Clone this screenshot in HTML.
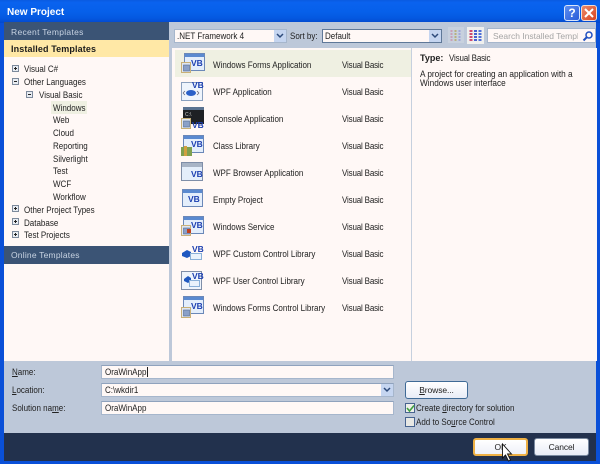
<!DOCTYPE html>
<html><head><meta charset="utf-8">
<style>
html,body{margin:0;padding:0}
body{width:600px;height:464px;position:relative;overflow:hidden;background:#0a50d8;font-family:"Liberation Sans",sans-serif;font-size:9px;color:#222;filter:blur(.3px)}
div,span,svg{position:absolute;box-sizing:border-box}
.t{white-space:nowrap;line-height:12px;height:12px;transform:scaleX(.89);transform-origin:0 50%}
.n{transform:none}
u{text-decoration:underline}
.inp{background:#fff8f6;border:1px solid #a6b6cc;border-top-color:#8fa2bd;height:14px}
.ddb{background:#c5d5f0;width:12px;height:12px}
.btn{background:linear-gradient(#fff,#e8ecf6);border:1px solid #4a6180;border-radius:3px;text-align:center;color:#222;font-size:8.500px;letter-spacing:-.1px}
.v{letter-spacing:-.2px}
</style></head><body>
<div style="left:0;top:0;width:600px;height:23px;background:linear-gradient(#0a5ae0 0,#0a62ee 10%,#0660ea 50%,#0458e0 80%,#0348cc 100%)"></div>
<div class="t n" style="left:7px;top:7px;font-size:10px;font-weight:bold;color:#fff">New Project</div>
<div style="left:564px;top:5px;width:16px;height:16px;background:linear-gradient(135deg,#5d8ef0,#2a5cd8);border:1px solid #dbe6fb;border-radius:3px;color:#fff;font-weight:bold;font-size:12px;line-height:14px;text-align:center">?</div>
<div style="left:581px;top:5px;width:16px;height:16px;background:linear-gradient(135deg,#ec8a6a,#d8431f);border:1px solid #f4dcd2;border-radius:3px"></div>
<svg style="left:584px;top:8px" width="10" height="10"><path d="M1 1L9 9M9 1L1 9" stroke="#fff" stroke-width="2"/></svg>

<div style="left:4px;top:22px;width:592px;height:439px;background:#bdc8d9"></div>

<!-- left -->
<div style="left:4px;top:22px;width:165px;height:18px;background:#3b5475"></div>
<div class="t n" style="left:11px;top:26px;color:#c8d3e2;font-size:8.500px;letter-spacing:.3px">Recent Templates</div>
<div style="left:4px;top:40px;width:165px;height:17px;background:#ffe8a6"></div>
<div class="t n" style="left:11px;top:43px;font-size:9px;font-weight:bold;color:#1c1c1c;letter-spacing:.12px">Installed Templates</div>
<div style="left:4px;top:57px;width:165px;height:189px;background:#fff8f6"></div>
<div style="left:4px;top:246px;width:165px;height:18px;background:#3b5475"></div>
<div class="t n" style="left:11px;top:249px;color:#c8d3e2;font-size:8.500px;letter-spacing:.2px">Online Templates</div>
<div style="left:4px;top:264px;width:165px;height:97px;background:#fff8f6"></div>

<svg style="left:12px;top:65px" width="9" height="9"><rect x=".5" y=".5" width="6" height="6" fill="#e8ecf2" stroke="#7d8a9c"/><path d="M2 3.500h3M3.500 2v3" stroke="#222"/></svg>
<svg style="left:12px;top:78px" width="9" height="9"><rect x=".5" y=".5" width="6" height="6" fill="#e8ecf2" stroke="#7d8a9c"/><path d="M2 3.500h3" stroke="#222"/></svg>
<svg style="left:26px;top:91px" width="9" height="9"><rect x=".5" y=".5" width="6" height="6" fill="#e8ecf2" stroke="#7d8a9c"/><path d="M2 3.500h3" stroke="#222"/></svg>
<svg style="left:12px;top:205px" width="9" height="9"><rect x=".5" y=".5" width="6" height="6" fill="#e8ecf2" stroke="#7d8a9c"/><path d="M2 3.500h3M3.500 2v3" stroke="#222"/></svg>
<svg style="left:12px;top:218px" width="9" height="9"><rect x=".5" y=".5" width="6" height="6" fill="#e8ecf2" stroke="#7d8a9c"/><path d="M2 3.500h3M3.500 2v3" stroke="#222"/></svg>
<svg style="left:12px;top:231px" width="9" height="9"><rect x=".5" y=".5" width="6" height="6" fill="#e8ecf2" stroke="#7d8a9c"/><path d="M2 3.500h3M3.500 2v3" stroke="#222"/></svg>
<div style="left:51px;top:101px;width:36px;height:13px;background:#eff0e2"></div>
<div class="t" style="left:24px;top:63px">Visual C#</div>
<div class="t" style="left:24px;top:76px">Other Languages</div>
<div class="t" style="left:39px;top:89px">Visual Basic</div>
<div class="t" style="left:53px;top:102px">Windows</div>
<div class="t" style="left:53px;top:114px">Web</div>
<div class="t" style="left:53px;top:127px">Cloud</div>
<div class="t" style="left:53px;top:140px">Reporting</div>
<div class="t" style="left:53px;top:153px">Silverlight</div>
<div class="t" style="left:53px;top:165px">Test</div>
<div class="t" style="left:53px;top:178px">WCF</div>
<div class="t" style="left:53px;top:191px">Workflow</div>
<div class="t" style="left:24px;top:204px">Other Project Types</div>
<div class="t" style="left:24px;top:217px">Database</div>
<div class="t" style="left:24px;top:229px">Test Projects</div>

<!-- toolbar -->
<div style="left:174px;top:29px;width:113px;height:14px;background:#fff8f6;border:1px solid #a6b6cc"></div>
<div class="t" style="left:177px;top:30px">.NET Framework 4</div>
<div class="ddb" style="left:274px;top:30px"></div>
<svg style="left:276px;top:33px" width="8" height="6"><path d="M1 1l3 3 3-3" fill="none" stroke="#2d4a7a" stroke-width="1.5"/></svg>
<div class="t" style="left:290px;top:30px">Sort by:</div>
<div style="left:322px;top:29px;width:120px;height:14px;background:#fff8f6;border:1px solid #5f7898"></div>
<div class="t" style="left:325px;top:30px">Default</div>
<div class="ddb" style="left:429px;top:30px"></div>
<svg style="left:431px;top:33px" width="8" height="6"><path d="M1 1l3 3 3-3" fill="none" stroke="#2d4a7a" stroke-width="1.5"/></svg>
<div style="left:448px;top:27px;width:16px;height:16px;background:#c8d1de"></div>
<svg style="left:450px;top:29px" width="12" height="12"><path d="M1.500 1v11" stroke="#c9a0b8" stroke-width="2" stroke-dasharray="2 1"/><path d="M5.500 1v11" stroke="#b8b080" stroke-width="2" stroke-dasharray="2 1"/><path d="M9.500 1v11" stroke="#a0a8d8" stroke-width="2" stroke-dasharray="2 1"/></svg>
<div style="left:467px;top:27px;width:17px;height:17px;background:#f0f0ee"></div>
<svg style="left:469px;top:29px" width="13" height="12"><path d="M2 1v11" stroke="#d04a70" stroke-width="3" stroke-dasharray="2 1"/><path d="M6.500 1v11" stroke="#4860d0" stroke-width="3" stroke-dasharray="2 1"/><path d="M11 1v11" stroke="#5070d8" stroke-width="3" stroke-dasharray="2 1"/></svg>
<div style="left:487px;top:28px;width:109px;height:15px;background:#fff8f6;border:1px solid #a6b6cc"></div>
<div class="t n" style="left:493px;top:30px;width:85px;overflow:hidden;color:#a5a5a5;font-size:8.500px">Search Installed Templates</div>
<svg style="left:582px;top:30px" width="12" height="12"><circle cx="7" cy="5" r="3" fill="none" stroke="#2050c0" stroke-width="1.5"/><path d="M5 7L1.500 10.500" stroke="#2050c0" stroke-width="2"/></svg>

<!-- middle list -->
<div style="left:172px;top:48px;width:239px;height:313px;background:#fff8f6"></div>
<div style="left:175px;top:50px;width:236px;height:27px;background:#eff0e2"></div>
<div style="left:411px;top:48px;width:1px;height:313px;background:#c6d0de"></div>

<svg style="left:0;top:0" width="600" height="464">
<defs>
<g id="w"><rect x=".5" y=".5" width="20" height="17" fill="#e4eefb" stroke="#6b88b8"/><rect x="1" y="1" width="19" height="3" fill="#5b8ad0"/></g>
<g id="vb"><text x="0" y="0" font-family="Liberation Sans" font-size="8.5" font-weight="bold" fill="#1c3fb0">VB</text></g>
<g id="fo"><rect x=".5" y=".5" width="9" height="10" fill="#dfe6f2" stroke="#c8b078"/><rect x="2.500" y="3" width="6" height="6" fill="#8aa0c8" stroke="#50688f" stroke-width=".6"/></g>
</defs>
<use href="#w" x="184" y="53"/><use href="#fo" x="181" y="62"/><use href="#vb" x="191" y="66"/>
<rect x="181.500" y="82.500" width="21" height="18" fill="#eef4fc" stroke="#8aa0be"/><ellipse cx="191" cy="93" rx="5" ry="3" fill="#2a60c8"/><path d="M183 93l2-2M183 93l2 2M199 93l-2-2M199 93l-2 2" stroke="#667" stroke-width=".8"/><use href="#vb" x="192" y="88"/>
<rect x="183" y="107" width="21" height="17" fill="#1e2024"/><rect x="183" y="107" width="21" height="3" fill="#5a7290"/><text x="185" y="116" font-family="Liberation Sans" font-size="5" fill="#ccc">C:\</text><use href="#fo" x="181" y="118"/><use href="#vb" x="192" y="128"/>
<use href="#w" x="183" y="135"/><rect x="181" y="147" width="11" height="9" fill="#7fa050"/><rect x="184" y="146" width="3" height="10" fill="#d0a040"/><use href="#vb" x="191" y="147"/>
<rect x="181.500" y="162.500" width="21" height="18" fill="#e4eefb" stroke="#7f8ea8"/><rect x="182" y="163" width="20" height="4" fill="#a8b4c6"/><use href="#vb" x="191" y="177"/>
<use href="#w" x="182" y="189"/><use href="#vb" x="188" y="202"/>
<use href="#w" x="183" y="216"/><use href="#fo" x="181" y="225"/><rect x="187" y="229" width="4" height="4" fill="#c04020"/><use href="#vb" x="191" y="228"/>
<path d="M182 253l5-3 4 2v4l-4 2-5-2z" fill="#1f58c0"/><rect x="190.500" y="253.500" width="11" height="6" fill="#eaf2fb" stroke="#8ab0d8"/><use href="#vb" x="192" y="252"/>
<rect x="181.500" y="271.500" width="20" height="18" fill="#eef4fc" stroke="#7f8ea8"/><path d="M184 279l4-3 3 2v3l-3 2-4-2z" fill="#1f58c0"/><rect x="189.500" y="280.500" width="10" height="6" fill="#eaf2fb" stroke="#8ab0d8"/><use href="#vb" x="192" y="279"/>
<use href="#w" x="183" y="296"/><use href="#fo" x="181" y="307"/><use href="#vb" x="191" y="309"/>
</svg>

<div class="t" style="left:213px;top:59px">Windows Forms Application</div><div class="t v" style="left:342px;top:59px">Visual Basic</div>
<div class="t" style="left:213px;top:86px">WPF Application</div><div class="t v" style="left:342px;top:86px">Visual Basic</div>
<div class="t" style="left:213px;top:113px">Console Application</div><div class="t v" style="left:342px;top:113px">Visual Basic</div>
<div class="t" style="left:213px;top:140px">Class Library</div><div class="t v" style="left:342px;top:140px">Visual Basic</div>
<div class="t" style="left:213px;top:167px">WPF Browser Application</div><div class="t v" style="left:342px;top:167px">Visual Basic</div>
<div class="t" style="left:213px;top:194px">Empty Project</div><div class="t v" style="left:342px;top:194px">Visual Basic</div>
<div class="t" style="left:213px;top:221px">Windows Service</div><div class="t v" style="left:342px;top:221px">Visual Basic</div>
<div class="t" style="left:213px;top:248px">WPF Custom Control Library</div><div class="t v" style="left:342px;top:248px">Visual Basic</div>
<div class="t" style="left:213px;top:275px">WPF User Control Library</div><div class="t v" style="left:342px;top:275px">Visual Basic</div>
<div class="t" style="left:213px;top:302px">Windows Forms Control Library</div><div class="t v" style="left:342px;top:302px">Visual Basic</div>

<!-- details -->
<div style="left:412px;top:48px;width:185px;height:313px;background:#fff8f6"></div>
<div class="t n" style="left:420px;top:52px;font-size:9px;font-weight:bold">Type:</div>
<div class="t v" style="left:449px;top:52px">Visual Basic</div>
<div class="t" style="left:420px;top:68px;transform:scaleX(.916)">A project for creating an application with a</div>
<div class="t" style="left:420px;top:77px;transform:scaleX(.916)">Windows user interface</div>

<!-- bottom -->
<div class="t" style="left:12px;top:366px"><u>N</u>ame:</div>
<div class="t" style="left:12px;top:384px"><u>L</u>ocation:</div>
<div class="t" style="left:12px;top:402px">Solution na<u>m</u>e:</div>
<div class="inp" style="left:101px;top:365px;width:293px"></div>
<div class="t" style="left:105px;top:366px">OraWinApp</div>
<div style="left:147px;top:367px;width:1px;height:10px;background:#222"></div>
<div class="inp" style="left:101px;top:383px;width:293px"></div>
<div class="t" style="left:105px;top:384px">C:\wkdir1</div>
<div class="ddb" style="left:381px;top:384px"></div>
<svg style="left:383px;top:387px" width="8" height="6"><path d="M1 1l3 3 3-3" fill="none" stroke="#2d4a7a" stroke-width="1.5"/></svg>
<div class="inp" style="left:101px;top:401px;width:293px"></div>
<div class="t" style="left:105px;top:402px">OraWinApp</div>
<div class="btn" style="left:405px;top:381px;width:63px;height:18px;line-height:16px;border-color:#3f6a96"><u>B</u>rowse...</div>
<div style="left:405px;top:403px;width:10px;height:10px;background:#eef0ea;border:1px solid #47638f"></div>
<svg style="left:406px;top:404px" width="9" height="9"><path d="M1 4l2.500 3L8 1.500" fill="none" stroke="#3fa03f" stroke-width="1.600"/></svg>
<div class="t" style="left:416px;top:402px">Create <u>d</u>irectory for solution</div>
<div style="left:405px;top:417px;width:10px;height:10px;background:#e8e8e4;border:1px solid #47638f"></div>
<div class="t" style="left:416px;top:416px">Add to So<u>u</u>rce Control</div>

<div style="left:4px;top:433px;width:592px;height:28px;background:#22314d"></div>
<div class="btn" style="left:473px;top:438px;width:55px;height:18px;line-height:14px;border:2px solid #eeb044;background:linear-gradient(#fff,#eef0f8)">OK</div>
<div class="btn" style="left:534px;top:438px;width:55px;height:18px;line-height:16px;border:1px solid #7a8aa0">Cancel</div>
<svg style="left:501px;top:443px" width="12" height="21"><path d="M1.500 1v14l3-3 3 6 2-1-3-6h4z" fill="#fff" stroke="#111" stroke-width=".9"/></svg>
</body></html>
